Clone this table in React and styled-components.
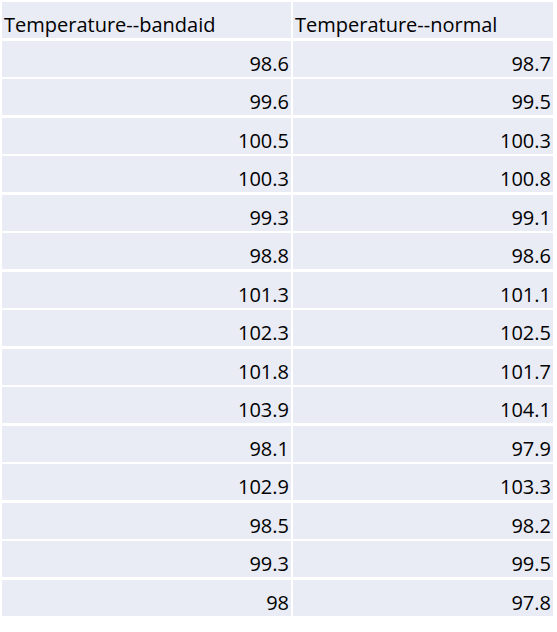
import React from "react";
import styled, { createGlobalStyle } from "styled-components";

const GlobalStyle = createGlobalStyle`
    body{
        margin:0;
        background:#ffffff;
        font-family:"Open Sans", "Liberation Sans", sans-serif;
    }
`;

const Sheet = styled.div`
    display:grid;
    grid-template-columns:289px 260px;
    grid-auto-rows:36px;
    column-gap:2px;
    row-gap:2.5px;
    padding:2px;
`;

const Cell = styled.div`
    display:flex;
    align-items:flex-end;
    justify-content:${props => props.head ? "flex-start" : "flex-end"};
    padding:0 2px 1px 2px;
    background:#e9ebf5;
    color:#000000;
    font-size:20px;
    line-height:25px;
    white-space:nowrap;
`;

const rows = [
    ["98.6", "98.7"],
    ["99.6", "99.5"],
    ["100.5", "100.3"],
    ["100.3", "100.8"],
    ["99.3", "99.1"],
    ["98.8", "98.6"],
    ["101.3", "101.1"],
    ["102.3", "102.5"],
    ["101.8", "101.7"],
    ["103.9", "104.1"],
    ["98.1", "97.9"],
    ["102.9", "103.3"],
    ["98.5", "98.2"],
    ["99.3", "99.5"],
    ["98", "97.8"],
];

export default function App() {
    return (
        <>
            <GlobalStyle />
            <Sheet>
                <Cell head>Temperature--bandaid</Cell>
                <Cell head>Temperature--normal</Cell>
                {rows.map((r, i) => (
                    <React.Fragment key={i}>
                        <Cell>{r[0]}</Cell>
                        <Cell>{r[1]}</Cell>
                    </React.Fragment>
                ))}
            </Sheet>
        </>
    );
}
